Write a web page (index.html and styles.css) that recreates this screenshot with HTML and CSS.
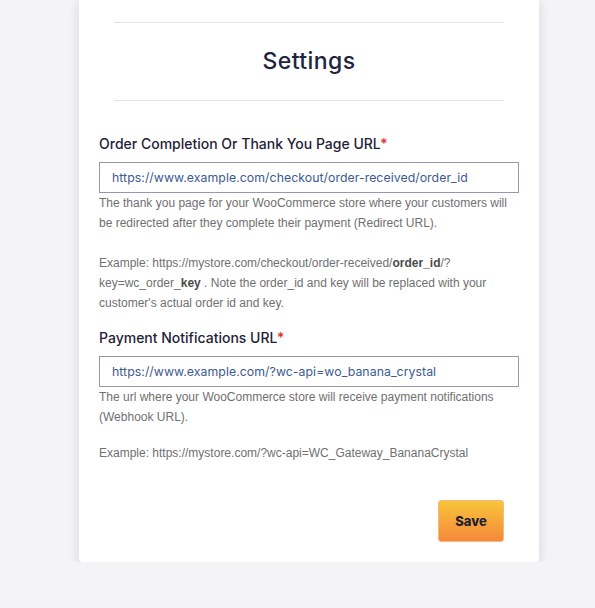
FILE: index.html
```html
<!DOCTYPE html>
<html>
<head>
<meta charset="utf-8">
<link rel="stylesheet" href="styles.css">
</head>
<body>
<div class="card">
  <div class="head">
    <hr class="rule">
    <h1 class="title">Settings</h1>
    <hr class="rule">
  </div>
  <div class="field first">
    <label class="label">Order Completion Or Thank You Page URL<span class="req">*</span></label>
    <div class="input">https://www.example.com/checkout/order-received/order_id</div>
    <p class="help">The thank you page for your WooCommerce store where your customers will be redirected after they complete their payment (Redirect URL).</p>
    <p class="help gap">Example: https://mystore.com/checkout/order-received/<b>order_id</b>/?key=wc_order_<b>key</b> . Note the order_id and key will be replaced with your customer's actual order id and key.</p>
  </div>
  <div class="field second">
    <label class="label">Payment Notifications URL<span class="req">*</span></label>
    <div class="input">https://www.example.com/?wc-api=wo_banana_crystal</div>
    <p class="help">The url where your WooCommerce store will receive payment notifications (Webhook URL).</p>
    <p class="help gap2">Example: https://mystore.com/?wc-api=WC_Gateway_BananaCrystal</p>
  </div>
  <div class="actions">
    <button class="save">Save</button>
  </div>
</div>
</body>
</html>
```

FILE: styles.css
```css
html, body {
  margin: 0;
  padding: 0;
  background: #f4f4f7;
}
.card {
  margin-left: 79px;
  width: 460px;
  background: #fff;
  border-radius: 0 0 4px 4px;
  box-shadow: 0 3px 12px rgba(20, 20, 50, 0.14);
  padding: 22px 20px 20px;
  box-sizing: border-box;
}
.head {
  padding: 0 15px;
}
.rule {
  border: 0;
  border-top: 1px solid #e3e3e6;
  margin: 0;
}
.title {
  margin: 0;
  height: 77px;
  line-height: 77px;
  text-align: center;
  font-family: Inter, "Noto Sans", sans-serif;
  font-weight: 500;
  font-size: 23px;
  letter-spacing: 0.4px;
  color: #1f2440;
}
.field {
  display: flex;
  flex-direction: column;
}
.first {
  margin-top: 33px;
}
.second {
  margin-top: 15px;
}
.label {
  font-family: Inter, "Noto Sans", sans-serif;
  font-weight: 500;
  font-size: 14px;
  line-height: 20px;
  color: #1f2237;
  margin-bottom: 8px;
}
.req {
  color: #e22a2a;
}
.input {
  height: 31px;
  box-sizing: border-box;
  border: 1px solid #9597b4;
  padding: 0 12px;
  line-height: 29px;
  font-family: Inter, "Noto Sans", sans-serif;
  font-size: 12.3px;
  letter-spacing: 0.05px;
  color: #3c5b8f;
}
.help {
  margin: 0;
  font-family: "Liberation Sans", Arial, sans-serif;
  font-size: 12px;
  line-height: 20px;
  color: #707070;
}
.help b {
  color: #4a4a4a;
}
.gap {
  margin-top: 20px;
}
.gap2 {
  margin-top: 16px;
}
.actions {
  display: flex;
  justify-content: flex-end;
  margin-top: 37px;
  padding-right: 15px;
}
.save {
  width: 66px;
  height: 42px;
  border: 1px solid #f2b98a;
  border-radius: 3px;
  background: linear-gradient(#f7c53a, #f6883a);
  font-family: Inter, "Noto Sans", sans-serif;
  font-weight: 800;
  font-size: 13px;
  color: #1f2237;
  padding: 0;
}
```
